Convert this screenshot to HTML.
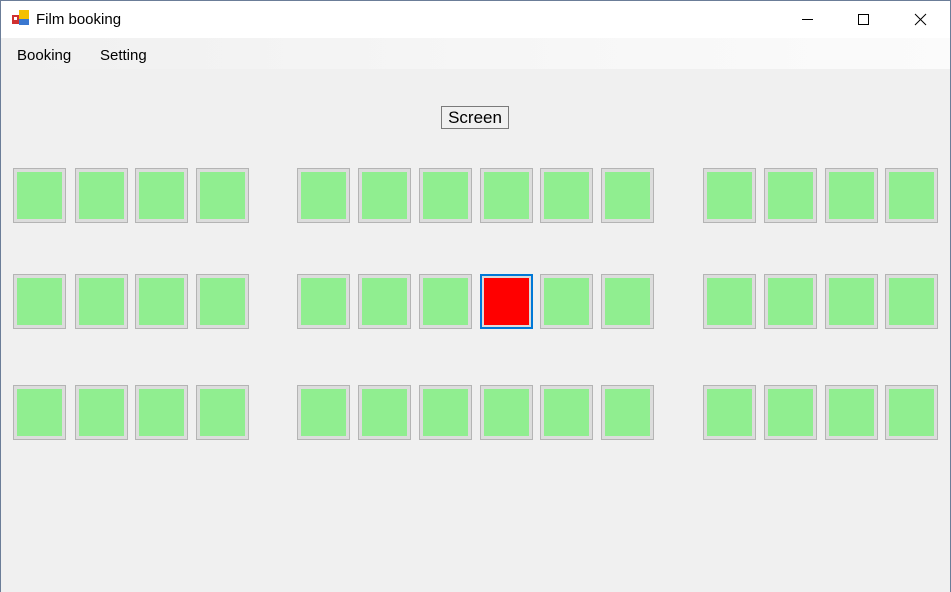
<!DOCTYPE html>
<html><head><meta charset="utf-8"><style>
*{margin:0;padding:0;box-sizing:border-box}
body{width:951px;height:592px;overflow:hidden;background:#f0f0f0;font-family:"Segoe UI","Liberation Sans","DejaVu Sans",sans-serif;position:relative}
.win{position:absolute;left:0;top:0;width:951px;height:592px;border:1px solid #6b7d98;border-bottom:none;z-index:5;pointer-events:none}
.title{position:absolute;left:0;top:0;width:100%;height:38px;background:#fff}
.title .t{position:absolute;left:36px;top:11px;font-size:15px;color:#000}
.menu{position:absolute;left:0;top:38px;width:100%;height:31px;background:linear-gradient(90deg,#f0f0f0,#f7f7f7 60%,#fbfbfb)}
.menu span{position:absolute;top:9px;font-size:15px;color:#000}
.b{position:absolute;width:53px;height:55px;border:1px solid #b4b4b4;background:#90ee90;box-shadow:inset 0 0 0 3px #dcdcdc}
.b.sel{border:2px solid #0078d7;background:#f00;box-shadow:inset 0 0 0 2px #dcdcdc}
.scr{position:absolute;left:441px;top:106px;width:68px;height:23px;border:1px solid #7a7a7a;font-size:17px;line-height:21px;text-align:center;color:#000}
</style></head><body>
<div class="win"></div>
<div class="title">
<svg style="position:absolute;left:12px;top:10px" width="18" height="16" viewBox="0 0 18 16"><rect x="0" y="5" width="7" height="9" fill="#d03030"/><rect x="7" y="0" width="10" height="9" fill="#f5c000"/><rect x="7" y="9" width="10" height="6" fill="#3a78d0"/><rect x="2" y="7" width="3" height="3" fill="#fff"/></svg>
<span class="t">Film booking</span>
<svg style="position:absolute;left:800px;top:12px" width="130" height="16" viewBox="0 0 130 16"><line x1="2" y1="7.5" x2="13" y2="7.5" stroke="#000"/><rect x="58.5" y="2.5" width="10" height="10" fill="none" stroke="#000"/><path d="M115 2L126 13M126 2L115 13" stroke="#000"/></svg>
</div>
<div class="menu"><span style="left:17px">Booking</span><span style="left:100px">Setting</span></div>
<div class="scr">Screen</div>
<div id="g"></div>
<script>
var xs=[13,75,135,196,297,358,419,480,540,601,703,764,825,885],ys=[168,274,385],h='';
ys.forEach(function(y,r){xs.forEach(function(x,c){h+='<div class="b'+(r==1&&c==7?' sel':'')+'" style="left:'+x+'px;top:'+y+'px"></div>'})});
document.getElementById('g').innerHTML=h;
</script>
</body></html>
